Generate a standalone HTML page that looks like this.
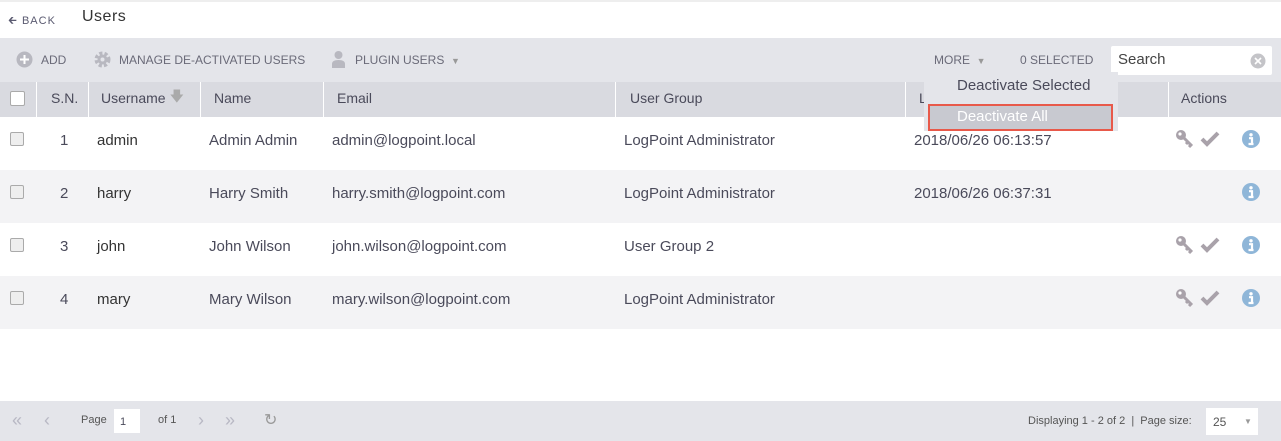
<!DOCTYPE html>
<html><head><meta charset="utf-8"><style>
*{box-sizing:border-box;margin:0;padding:0}
body{width:1281px;height:441px;overflow:hidden;background:#fff;font-family:"Liberation Sans",sans-serif;color:#4a4a5a;position:relative}
.abs{position:absolute}
.hdr{top:0;left:0;width:1281px;height:38px;background:#fff;border-top:2px solid #eee}
.tb{top:38px;left:0;width:1281px;height:44px;background:#e4e5ea}
.th{top:82px;left:0;width:1281px;height:35px;background:#d9dae0;font-size:14px;color:#4a4a5a}
.th .cell{padding-bottom:3px}
.row{left:0;width:1281px;height:53px;font-size:15px;color:#4a4a5a}
.row .cell{padding-bottom:7px}
.cell{position:absolute;top:0;height:100%;display:flex;align-items:center}
.sep{position:absolute;top:0;width:1px;height:35px;background:#fff}
.cb{position:absolute;width:14px;height:14px;border:1px solid #aaa;background:#eee;border-radius:2px}
.tbt{font-size:12px;color:#6a6a78;top:53px}
.ft{top:401px;left:0;width:1281px;height:40px;background:#e4e5ea;font-size:11px;color:#555}
</style></head><body>
<div class="abs hdr"></div>
<div class="abs" style="top:12px;left:8px;font-size:11px;color:#5a5a70;letter-spacing:1px">&#129136; BACK</div>
<div class="abs" style="top:8px;left:82px;font-size:16px;color:#333;letter-spacing:.5px">Users</div>
<div class="abs tb"></div>
<svg class="abs" style="left:16px;top:51px" width="17" height="17"><circle cx="8.5" cy="8.5" r="8" fill="#b8b8c0"/><path d="M8.5 4v9M4 8.5h9" stroke="#fff" stroke-width="2"/></svg>
<div class="abs tbt" style="left:41px">ADD</div>
<svg class="abs" style="left:94px;top:51px" width="17" height="17"><circle cx="8.5" cy="8.5" r="6" fill="none" stroke="#b8b8c0" stroke-width="4" stroke-dasharray="3 2"/><circle cx="8.5" cy="8.5" r="5" fill="#b8b8c0"/><circle cx="8.5" cy="8.5" r="2" fill="#e4e5ea"/></svg>
<div class="abs tbt" style="left:119px">MANAGE DE-ACTIVATED USERS</div>
<svg class="abs" style="left:331px;top:50px" width="15" height="18"><circle cx="7.5" cy="5" r="4" fill="#b8b8c0"/><path d="M1 18v-4q0-4 6.5-4t6.5 4v4z" fill="#b8b8c0"/></svg>
<div class="abs tbt" style="left:355px">PLUGIN USERS &nbsp;<span style="font-size:9px;color:#999">&#9660;</span></div>
<div class="abs tbt" style="left:934px">MORE &nbsp;<span style="font-size:9px;color:#999">&#9660;</span></div>
<div class="abs tbt" style="left:1020px">0 SELECTED</div>
<div class="abs" style="left:1111px;top:46px;width:161px;height:29px;background:#fff;border-radius:2px"></div>
<div class="abs" style="left:1118px;top:51px;font-size:15px;color:#444">Search</div>
<svg class="abs" style="left:1250px;top:53px" width="16" height="16"><circle cx="8" cy="8" r="7.5" fill="#c4c4c8"/><path d="M5 5l6 6M11 5l-6 6" stroke="#fff" stroke-width="1.6"/></svg>
<div class="abs th">
<div class="sep" style="left:36px"></div><div class="sep" style="left:88px"></div><div class="sep" style="left:200px"></div><div class="sep" style="left:323px"></div><div class="sep" style="left:615px"></div><div class="sep" style="left:905px"></div><div class="sep" style="left:1168px"></div>
<div class="cb" style="left:10px;top:9px;background:#fff;width:15px;height:15px"></div>
<div class="cell" style="left:51px">S.N.</div>
<div class="cell" style="left:101px">Username <span style="color:#aaa;margin-left:4px">&#129095;</span></div>
<div class="cell" style="left:214px">Name</div>
<div class="cell" style="left:337px">Email</div>
<div class="cell" style="left:630px">User Group</div>
<div class="cell" style="left:919px">L</div>
<div class="cell" style="left:1181px">Actions</div>
</div>
<div class="abs row" style="top:117px;background:#fff"></div>
<div class="abs row" style="top:170px;background:#f3f3f5"></div>
<div class="abs row" style="top:223px;background:#fff"></div>
<div class="abs row" style="top:276px;background:#f3f3f5"></div>
<div class="abs" style="top:117px;left:0;width:1281px;font-size:15px;color:#4a4a5a">
<div class="abs row" style="top:0"><div class="cb" style="left:10px;top:15px"></div><div class="cell" style="left:60px">1</div><div class="cell" style="left:97px;color:#333">admin</div><div class="cell" style="left:209px">Admin Admin</div><div class="cell" style="left:332px">admin@logpoint.local</div><div class="cell" style="left:624px">LogPoint Administrator</div><div class="cell" style="left:914px">2018/06/26 06:13:57</div></div>
<div class="abs row" style="top:53px"><div class="cb" style="left:10px;top:15px"></div><div class="cell" style="left:60px">2</div><div class="cell" style="left:97px;color:#333">harry</div><div class="cell" style="left:209px">Harry Smith</div><div class="cell" style="left:332px">harry.smith@logpoint.com</div><div class="cell" style="left:624px">LogPoint Administrator</div><div class="cell" style="left:914px">2018/06/26 06:37:31</div></div>
<div class="abs row" style="top:106px"><div class="cb" style="left:10px;top:15px"></div><div class="cell" style="left:60px">3</div><div class="cell" style="left:97px;color:#333">john</div><div class="cell" style="left:209px">John Wilson</div><div class="cell" style="left:332px">john.wilson@logpoint.com</div><div class="cell" style="left:624px">User Group 2</div></div>
<div class="abs row" style="top:159px"><div class="cb" style="left:10px;top:15px"></div><div class="cell" style="left:60px">4</div><div class="cell" style="left:97px;color:#333">mary</div><div class="cell" style="left:209px">Mary Wilson</div><div class="cell" style="left:332px">mary.wilson@logpoint.com</div><div class="cell" style="left:624px">LogPoint Administrator</div></div>
</div>
<svg width="0" height="0" style="position:absolute"><defs>
<g id="key"><circle cx="6" cy="6" r="5" fill="#a9a2aa"/><circle cx="5" cy="5" r="1.6" fill="#fff"/><path d="M8 8l9 9M13 13l-2 2M16 16l-2 2" stroke="#a9a2aa" stroke-width="3"/></g>
<g id="chk"><path d="M1 9l5 5L17 3" stroke="#a9a2aa" stroke-width="4" fill="none"/></g>
<g id="inf"><circle cx="9" cy="9" r="9" fill="#8fb6d8"/><circle cx="9" cy="4.8" r="1.7" fill="#fff"/><path d="M7 8.2h3v5.5M6.5 14h5" stroke="#fff" stroke-width="2.2" fill="none"/></g>
</defs></svg>
<svg class="abs" style="left:1175px;top:129px" width="95" height="190">
<use href="#key"/><use href="#chk" x="26" y="1"/><use href="#inf" x="67" y="1"/>
<use href="#inf" x="67" y="54"/>
<use href="#key" y="106"/><use href="#chk" x="26" y="107"/><use href="#inf" x="67" y="107"/>
<use href="#key" y="159"/><use href="#chk" x="26" y="160"/><use href="#inf" x="67" y="160"/>
</svg>
<div class="abs" style="left:924px;top:72px;width:194px;height:59px;background:#e4e5ea"></div>
<div class="abs" style="left:957px;top:77px;font-size:15px;color:#4a4a5a">Deactivate Selected</div>
<div class="abs" style="left:928px;top:104px;width:185px;height:27px;background:#c8c9d0;border:2px solid #e8594a"></div>
<div class="abs" style="left:957px;top:108px;font-size:15px;color:#fff">Deactivate All</div>
<div class="abs ft"></div>
<div class="abs" style="top:410px;left:12px;font-size:18px;color:#b8b8c4">&#171;</div>
<div class="abs" style="top:410px;left:44px;font-size:18px;color:#b8b8c4">&#8249;</div>
<div class="abs" style="top:414px;left:81px;font-size:11px;color:#555">Page</div>
<div class="abs" style="top:409px;left:114px;width:26px;height:24px;background:#fff;font-size:11px;padding:7px 0 0 6px">1</div>
<div class="abs" style="top:414px;left:158px;font-size:11px;color:#555">of 1</div>
<div class="abs" style="top:410px;left:198px;font-size:18px;color:#b8b8c4">&#8250;</div>
<div class="abs" style="top:410px;left:225px;font-size:18px;color:#b8b8c4">&#187;</div>
<div class="abs" style="top:410px;left:264px;font-size:16px;color:#999">&#8635;</div>
<div class="abs" style="top:415px;left:1028px;font-size:11px;color:#555">Displaying 1 - 2 of 2 &nbsp;| &nbsp;Page size:</div>
<div class="abs" style="top:408px;left:1206px;width:52px;height:27px;background:#fff;font-size:12px;padding:7px 0 0 7px;color:#555">25 <span style="position:absolute;left:38px;font-size:8px;color:#999;top:9px">&#9660;</span></div>
</body></html>
